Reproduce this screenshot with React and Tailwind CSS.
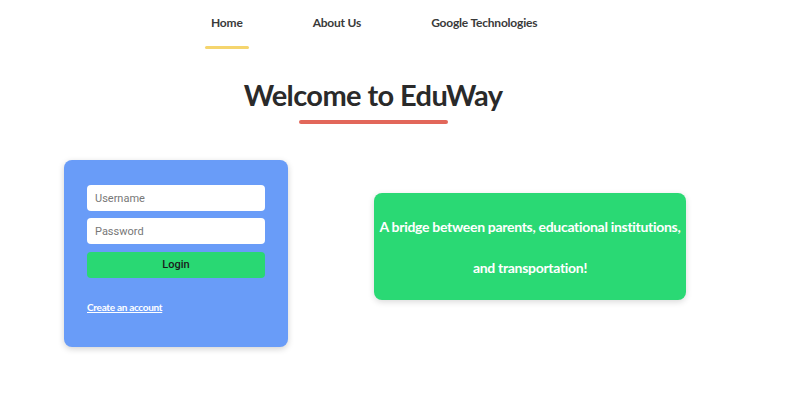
export default function App() {
  const navItems = ['Home', 'About Us', 'Google Technologies'];

  return (
    <div className="w-[806px] h-[411px] bg-white overflow-hidden" style={{ fontFamily: 'Lato, "Noto Sans", sans-serif' }}>
      <div className="w-[746px]">
        {/* Nav */}
        <nav className="flex gap-[58px] pl-[205px] pt-[14px]">
          {navItems.map((item, i) => (
            <div key={item} className="flex flex-col items-center">
              <span className="px-[6px] text-[12px] font-bold text-[#3a3a3a] leading-[18px] tracking-[-0.2px]">{item}</span>
              <span className={'mt-[14px] h-[3px] w-full rounded-full ' + (i === 0 ? 'bg-[#f5d56e]' : 'bg-transparent')} />
            </div>
          ))}
        </nav>

        {/* Heading */}
        <div className="flex flex-col items-center mt-[26px]">
          <h1 className="text-[29px] font-bold text-[#2a2a2a] leading-[40px] tracking-[-0.6px]">Welcome to EduWay</h1>
          <span className="mt-[5px] h-[4px] w-[149px] rounded-full bg-[#e2675a]" />
        </div>

        {/* Content */}
        <div className="flex items-start pl-[64px] gap-[86px] mt-[36px]">
          <div className="w-[224px] h-[187px] rounded-[8px] bg-[#699cf8] shadow-[0_2px_6px_rgba(0,0,0,0.18)] px-[23px] pt-[25px]">
            <input
              type="text"
              placeholder="Username"
              className="block w-full h-[26px] rounded-[4px] bg-white px-[8px] text-[11px] text-[#333] placeholder:text-[#777] outline-none"
              style={{ fontFamily: 'Roboto, "Liberation Sans", sans-serif' }}
            />
            <input
              type="password"
              placeholder="Password"
              className="block w-full h-[26px] mt-[7px] rounded-[4px] bg-white px-[8px] text-[11px] text-[#333] placeholder:text-[#777] outline-none"
              style={{ fontFamily: 'Roboto, "Liberation Sans", sans-serif' }}
            />
            <button
              className="block w-full h-[26px] mt-[8px] rounded-[4px] bg-[#29d873] text-[11px] font-medium text-[#1a1a1a]"
              style={{ fontFamily: 'Roboto, "Liberation Sans", sans-serif' }}
            >
              Login
            </button>
            <a href="#" className="block mt-[22px] text-[10px] font-bold text-white underline leading-[14px] tracking-[-0.3px]">
              Create an account
            </a>
          </div>

          <div className="mt-[33px] w-[312px] h-[107px] rounded-[8px] bg-[#2ad974] shadow-[0_2px_6px_rgba(0,0,0,0.15)] flex flex-col items-center justify-center">
            <p className="text-[14px] font-bold text-white leading-[41px] text-center tracking-[-0.3px]">
              A bridge between parents, educational institutions,
              <br />
              and transportation!
            </p>
          </div>
        </div>
      </div>
    </div>
  );
}
